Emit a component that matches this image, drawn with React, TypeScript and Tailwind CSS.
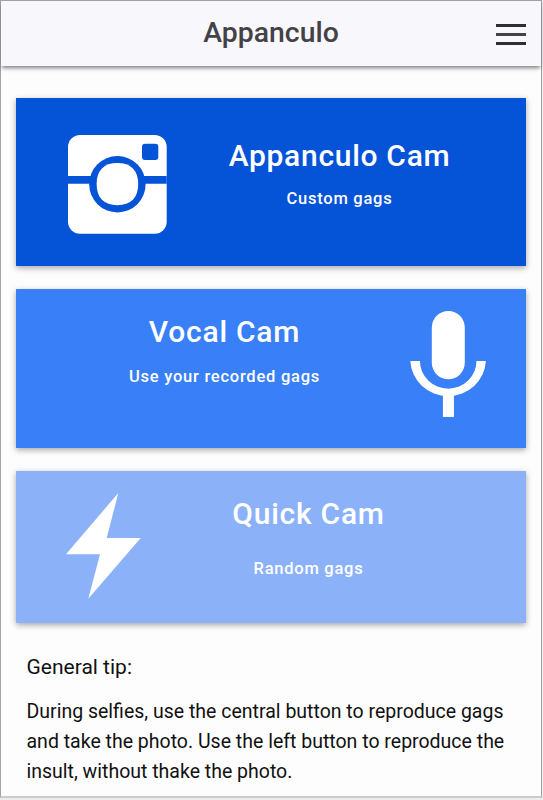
function CameraIcon() {
  return (
    <svg className="h-[99px] w-[99px]" viewBox="0 0 99 99" fill="none">
      <rect width="98.7" height="98.7" rx="12" fill="#fff" />
      <path d="M0 41h98.7v7.7H0z" fill="#0553d7" />
      <circle cx="49.4" cy="49.2" r="28.2" fill="#0553d7" />
      <path
        d="M49.4 28c13.6 0 20.8 7.4 20.8 21.1S63 70.2 49.4 70.2 28.6 62.8 28.6 49.1 35.8 28 49.4 28z"
        fill="#fff"
      />
      <rect x="74" y="8.7" width="16.3" height="16.3" rx="3" fill="#0553d7" />
    </svg>
  );
}

function MicIcon() {
  return (
    <svg className="h-[106px] w-[76px]" viewBox="0 0 76 106" fill="#fff">
      <rect x="21.8" width="33" height="68.3" rx="16.5" />
      <path d="M.3 50h9.6a28.3 27.7 0 0 0 56.6 0h9.4A37.85 37 0 0 1 .3 50z" />
      <path d="M32.9 84h11v22h-11z" />
    </svg>
  );
}

function BoltIcon() {
  return (
    <svg className="h-[106px] w-[75px]" viewBox="0 0 75 106" fill="#fff">
      <path d="M52.3 0 40.7 45h34L22.3 105.7 34 61.3H0z" />
    </svg>
  );
}

export default function App() {
  return (
    <div className="h-[800px] w-[543px] bg-[#ededed] font-['Roboto',sans-serif]">
      <div className="flex h-[798px] w-[542px] flex-col border border-b-2 border-[#a3a2a4] border-b-[#cccccc] bg-[#fefdfe]">
        {/* Header */}
        <header className="flex h-[65px] shrink-0 items-center justify-between bg-[#f8f7fb] pr-[15px] shadow-[0_3px_4px_-1px_rgba(0,0,0,0.5)]">
          <div className="w-[45px]" />
          <h1 className="pb-px text-[28.4px] leading-9 font-medium text-[#434246]">Appanculo</h1>
          <button aria-label="Menu" className="flex w-[30px] flex-col gap-1.5 pt-0.5">
            <span className="h-[3px] bg-[#2f2e32]" />
            <span className="h-[3px] bg-[#434246]" />
            <span className="h-[3px] bg-[#2f2e32]" />
          </button>
        </header>

        {/* Cards */}
        <main className="flex flex-col px-[15px] pt-8 text-center font-medium text-white">
          <section className="flex h-[168px] bg-[#0553d7] pt-[37px] pr-3.5 pl-[52px] shadow-[0_2px_6px_rgba(0,0,0,0.35)]">
            <CameraIcon />
            <div className="flex-1 pt-[3px]">
              <h2 className="text-[30px] leading-9 tracking-[0.7px]">Appanculo Cam</h2>
              <p className="mt-[15px] text-[16.5px] leading-5 tracking-[0.75px]">Custom gags</p>
            </div>
          </section>

          <section className="mt-[23px] flex h-[159px] bg-[#397ff8] pt-[22px] pr-10 pl-[23px] shadow-[0_2px_6px_rgba(0,0,0,0.35)]">
            <div className="flex-1 pt-[3px]">
              <h2 className="text-[30px] leading-9 tracking-[0.75px]">Vocal Cam</h2>
              <p className="mt-[17px] text-[16.5px] leading-5 tracking-[0.75px]">Use your recorded gags</p>
            </div>
            <MicIcon />
          </section>

          <section className="mt-[23px] flex h-[152px] bg-[#8bb2f9] pt-[22px] pr-[50px] pl-[50px] shadow-[0_2px_6px_rgba(0,0,0,0.35)]">
            <BoltIcon />
            <div className="flex-1 pt-[3px]">
              <h2 className="text-[30px] leading-9 tracking-[0.75px]">Quick Cam</h2>
              <p className="mt-[27px] text-[16.5px] leading-5 tracking-[0.75px]">Random gags</p>
            </div>
          </section>
        </main>

        {/* Tip */}
        <section className="pt-[29px] pr-6 pl-[25.5px] text-[#111]">
          <h3 className="text-[21px] leading-[30px]">General tip:</h3>
          <p className="mt-[15px] text-[19.5px] leading-[30px] whitespace-nowrap">
            During selfies, use the central button to reproduce gags
            <br />
            and take the photo. Use the left button to reproduce the
            <br />
            insult, without thake the photo.
          </p>
        </section>
      </div>
    </div>
  );
}
